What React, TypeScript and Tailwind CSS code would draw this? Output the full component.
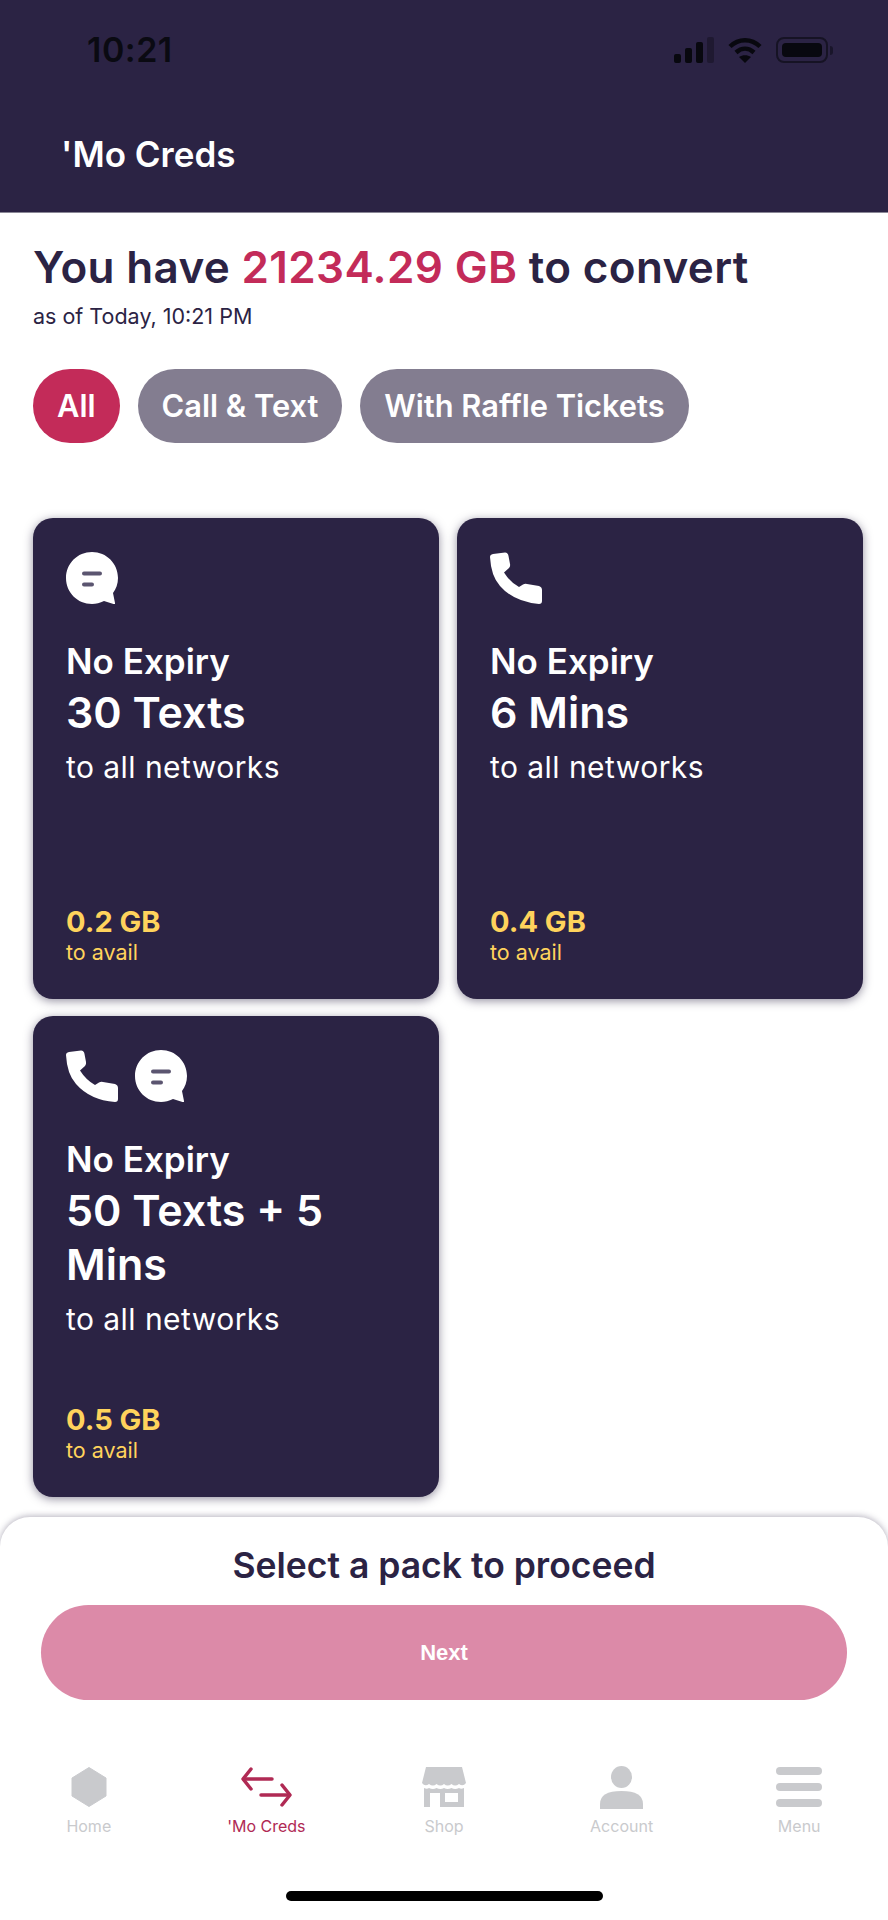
import React from 'react'

const heading = "font-['Inter',sans-serif]"
const body = "font-['Inter',sans-serif]"

function ChatIcon() {
  return (
    <svg width="52" height="52" viewBox="0 0 52 52">
      <path d="M26 0C40.500 0 52 11.500 52 26C52 32 50 37 47 41L49 51C49.500 52 48.500 52 47.500 52L38 49C34 51 30 52 26 52C11.500 52 0 40.500 0 26C0 11.500 11.500 0 26 0Z" fill="#fff" />
      <rect x="16" y="19.500" width="20" height="4" rx="2" fill="#5b5570" />
      <rect x="16" y="30.500" width="12" height="4" rx="2" fill="#5b5570" />
    </svg>
  )
}

function PhoneIcon() {
  return (
    <svg width="52" height="52" viewBox="0 0 52 52">
      <path d="M3 2L15 0.500Q18 0.500 18.500 4L20 12Q20.500 14.500 19 16L14 20.500Q20 30 29 35L33 32.500Q35 31.500 37 32L49 34Q52 35 52 38L52 49Q52 52 49 52Q24 50 10 34Q1 24 0 5Q0 2.500 3 2Z" fill="#fff" />
    </svg>
  )
}

function HomeIcon() {
  return (
    <svg width="36" height="40" viewBox="0 0 36 40">
      <path d="M18 0.500L35 11V29L18 39.500L1 29V11Z" fill="#c9cacd" strokeLinejoin="round" stroke="#c9cacd" strokeWidth="1" />
    </svg>
  )
}

function SwapIcon() {
  return (
    <svg width="51" height="40" viewBox="0 0 51 40" fill="none" stroke="#b02a54" strokeWidth="3.500" strokeLinecap="round" strokeLinejoin="round">
      <path d="M10 2L2 12L10 22" />
      <path d="M3 12H31" />
      <path d="M41 18L49 28L41 38" />
      <path d="M20 28H48" />
    </svg>
  )
}

function ShopIcon() {
  return (
    <svg width="44" height="40" viewBox="0 0 44 40">
      <path d="M4 0H40L44 16Q41 20 37 17Q33 20 29.500 17Q25.500 20 22 17Q18.500 20 14.500 17Q11 20 7 17Q3 20 0 16Z" fill="#c9cacd" />
      <path d="M2 21Q5 22.500 7 21Q11 23 14.500 21Q18.500 23 22 21Q25.500 23 29.500 21Q33 23 37 21Q39 22.500 42 21V40H2Z" fill="#c9cacd" />
      <rect x="8" y="26" width="10" height="14" fill="#fff" />
      <rect x="23" y="26" width="13" height="9" fill="#fff" />
    </svg>
  )
}

function AccountIcon() {
  return (
    <svg width="43" height="43" viewBox="0 0 43 43">
      <ellipse cx="21.500" cy="11" rx="10.500" ry="11" fill="#c9cacd" />
      <path d="M0 43V38Q0 25 21.500 25Q43 25 43 38V43Z" fill="#c9cacd" />
    </svg>
  )
}

function MenuIcon() {
  return (
    <div className="flex flex-col gap-2">
      <div className="w-[46px] h-2 rounded-full bg-[#c9cacd]" />
      <div className="w-[46px] h-2 rounded-full bg-[#c9cacd]" />
      <div className="w-[46px] h-2 rounded-full bg-[#c9cacd]" />
    </div>
  )
}

function StatusBar() {
  return (
    <div className="flex items-center justify-between h-[26px] pl-[87px] pr-[55px]">
      <span className={`${body} font-semibold text-[34px] leading-none tracking-[0.5px] text-[#0a0a12]`}>10:21</span>
      <div className="flex items-center gap-[14px]">
        <svg width="40" height="26" viewBox="0 0 40 26">
          <rect x="0" y="17" width="7" height="9" rx="2" fill="#08080f" />
          <rect x="11" y="11" width="7" height="15" rx="2" fill="#08080f" />
          <rect x="22" y="5" width="7" height="21" rx="2" fill="#08080f" />
          <rect x="33" y="0" width="7" height="26" rx="2" fill="#08080f" opacity="0.35" />
        </svg>
        <svg width="34" height="26" viewBox="0 0 34 26" fill="none" stroke="#08080f" strokeLinecap="butt">
          <path d="M2 9.500C10.500 1 23.500 1 32 9.500" strokeWidth="4.500" />
          <path d="M8 15.500C13.500 10.500 20.500 10.500 26 15.500" strokeWidth="4.500" />
          <path d="M17 26L11 20C14.500 17.500 19.500 17.500 23 20Z" fill="#08080f" stroke="none" />
        </svg>
        <div className="flex items-center gap-[2px]">
          <div className="w-[52px] h-[26px] p-[4px] rounded-[8px] border-2 border-[#08080f]/60">
            <div className="w-full h-full rounded-[4px] bg-[#08080f]" />
          </div>
          <div className="w-[3px] h-[9px] rounded-r-sm bg-[#08080f]/50" />
        </div>
      </div>
    </div>
  )
}

function Pill({ label, active }: { label: string; active?: boolean }) {
  return (
    <div className={`${heading} flex items-center h-[74px] px-[24px] rounded-full text-white font-semibold text-[30.800px] ${active ? 'bg-[#c32b59]' : 'bg-[#837d90]'}`}>
      {label}
    </div>
  )
}

function PackCard({ icons, title, price }: { icons: React.ReactNode; title: string; price: string }) {
  return (
    <div className="flex flex-col justify-between h-[481px] pt-[34px] pb-[33px] pl-[33px] pr-[34px] rounded-[20px] bg-[#2b2344] text-white shadow-[0_2px_10px_rgba(43,35,68,0.5)]">
      <div>
        <div className="flex items-center gap-[17px] h-[52px]">{icons}</div>
        <p className={`${heading} font-semibold text-[35px] leading-[40px] mt-[37px]`}>No Expiry</p>
        <p className={`${heading} font-semibold text-[43px] leading-[54px] mt-[4px]`}>{title}</p>
        <p className={`${body} text-[30px] leading-[36px] tracking-[0.45px] mt-[10px]`}>to all networks</p>
      </div>
      <div>
        <p className={`${heading} font-bold text-[29px] leading-[32px] text-[#ffd35c]`}>{price}</p>
        <p className={`${heading} text-[21.500px] leading-[28px] text-[#ffd35c]`}>to avail</p>
      </div>
    </div>
  )
}

function NavItem({ icon, label, active }: { icon: React.ReactNode; label: string; active?: boolean }) {
  return (
    <div className="flex flex-col items-center">
      <div className="flex items-center justify-center h-[42px]">{icon}</div>
      <span className={`${body} text-[16px] leading-[20px] mt-[8px] ${active ? 'text-[#b02a54]' : 'text-[#c9cacd]'}`}>{label}</span>
    </div>
  )
}

export default function App() {
  return (
    <div className="flex flex-col w-[888px] h-[1920px] bg-white overflow-hidden">
      <header className="h-[213px] pt-[37px] bg-[#2b2344] border-b border-[#8a8796]">
        <StatusBar />
        <h1 className={`${heading} font-semibold text-[35px] leading-[40px] text-white pl-[61px] mt-[71px]`}>'Mo Creds</h1>
      </header>

      <main className="flex-1 pl-[33px] pr-[25px]">
        <h2 className={`${heading} font-semibold text-[44px] leading-[50px] tracking-[0.35px] text-[#2b2344] mt-[29px]`}>
          You have <span className="text-[#c32b59]">21234.29 GB</span> to convert
        </h2>
        <p className={`${body} text-[21.500px] leading-[28px] text-[#2b2344] mt-[10px]`}>as of Today, 10:21 PM</p>
        <div className="flex gap-[18px] mt-[39px]">
          <Pill label="All" active />
          <Pill label="Call & Text" />
          <Pill label="With Raffle Tickets" />
        </div>
        <div className="grid grid-cols-2 gap-x-[18px] gap-y-[17px] mt-[75px]">
          <PackCard icons={<ChatIcon />} title="30 Texts" price="0.2 GB" />
          <PackCard icons={<PhoneIcon />} title="6 Mins" price="0.4 GB" />
          <PackCard icons={<><PhoneIcon /><ChatIcon /></>} title="50 Texts + 5 Mins" price="0.5 GB" />
        </div>
      </main>

      <footer className="h-[403px] rounded-t-[30px] bg-white shadow-[0_-1px_6px_rgba(43,35,68,0.35)]">
        <p className={`${heading} font-semibold text-[35.500px] leading-[42px] text-center text-[#2b2344] mt-[28px]`}>Select a pack to proceed</p>
        <div className="flex items-center justify-center h-[95px] mx-[41px] mt-[18px] rounded-full bg-[#dc8aa8]">
          <span className="font-['Liberation_Sans',sans-serif] font-bold text-[22px] text-white">Next</span>
        </div>
        <nav className="grid grid-cols-5 mt-[66px]">
          <NavItem icon={<HomeIcon />} label="Home" />
          <NavItem icon={<SwapIcon />} label="'Mo Creds" active />
          <NavItem icon={<ShopIcon />} label="Shop" />
          <NavItem icon={<AccountIcon />} label="Account" />
          <NavItem icon={<MenuIcon />} label="Menu" />
        </nav>
        <div className="w-[317px] h-[10px] rounded-full bg-black mx-auto mt-[55px]" />
      </footer>
    </div>
  )
}
